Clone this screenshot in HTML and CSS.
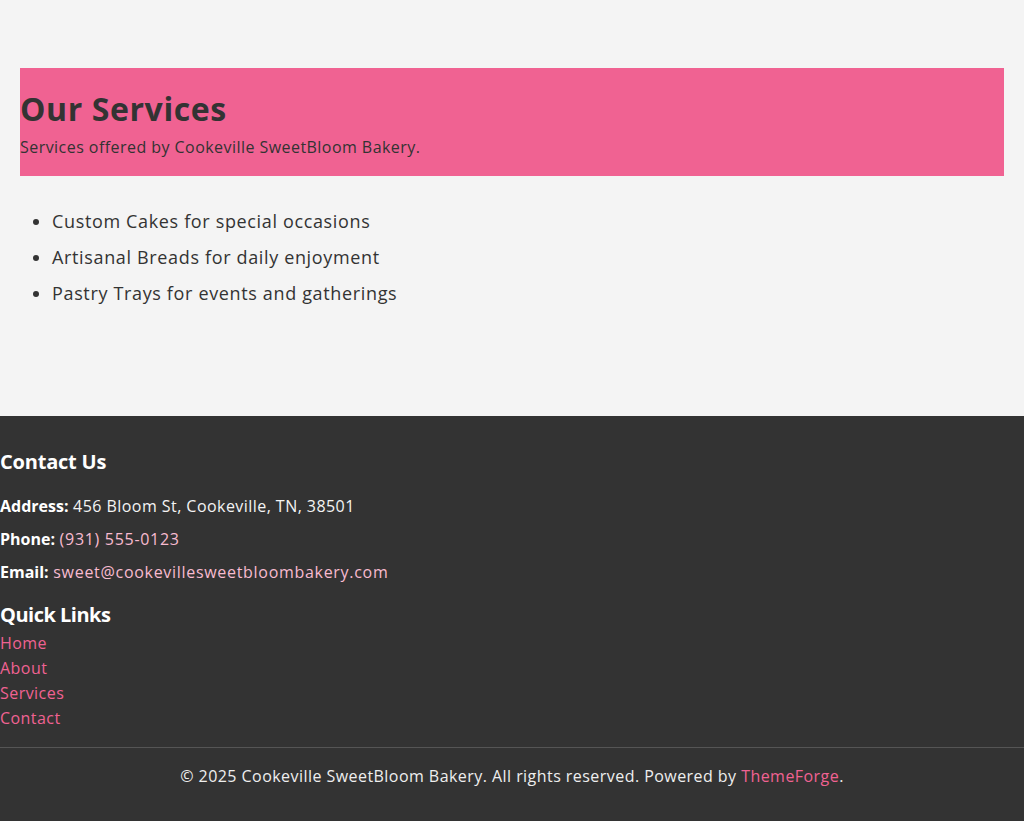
FILE: index.html
```html
<!DOCTYPE html>
<html lang="en">
<head>
<meta charset="utf-8">
<title>Our Services - Cookeville SweetBloom Bakery</title>
<link rel="stylesheet" href="styles.css">
</head>
<body>
<main class="main">
  <section class="hero">
    <h2 class="hero-title">Our Services</h2>
    <p class="hero-sub">Services offered by Cookeville SweetBloom Bakery.</p>
  </section>
  <ul class="services">
    <li>Custom Cakes for special occasions</li>
    <li>Artisanal Breads for daily enjoyment</li>
    <li>Pastry Trays for events and gatherings</li>
  </ul>
</main>
<footer class="footer">
  <h3 class="footer-title">Contact Us</h3>
  <p class="contact-line address"><strong>Address:</strong> 456 Bloom St, Cookeville, TN, 38501</p>
  <p class="contact-line"><strong>Phone:</strong> <a class="soft-link" href="#">(931) 555-0123</a></p>
  <p class="contact-line"><strong>Email:</strong> <a class="soft-link" href="#">sweet@cookevillesweetbloombakery.com</a></p>
  <h3 class="footer-title links-title">Quick Links</h3>
  <ul class="quick-links">
    <li><a href="#">Home</a></li>
    <li><a href="#">About</a></li>
    <li><a href="#">Services</a></li>
    <li><a href="#">Contact</a></li>
  </ul>
  <div class="copyright">© 2025 Cookeville SweetBloom Bakery. All rights reserved. Powered by <a href="#">ThemeForge</a>.</div>
</footer>
</body>
</html>
```

FILE: styles.css
```css
* { box-sizing: border-box; }
html, body { margin: 0; padding: 0; }
body {
  background: #f4f4f4;
  color: #333333;
  font-family: "Open Sans", "Liberation Sans", sans-serif;
  font-size: 16px;
  line-height: 24px;
  letter-spacing: 0.45px;
}
.main {
  padding: 68px 20px 0;
}
.hero {
  background: #f06292;
  padding: 20px 0 17px;
}
.hero-title {
  margin: 0;
  font-size: 32px;
  line-height: 42px;
  font-weight: 700;
  letter-spacing: 0.6px;
  color: #333333;
}
.hero-sub {
  margin: 5px 0 0;
  font-size: 16px;
  line-height: 24px;
  color: #333333;
}
.services {
  margin: 31px 0 0;
  padding: 0 0 109px 32px;
  font-size: 18px;
  line-height: 28px;
  letter-spacing: 0.65px;
}
.services li { margin-bottom: 8px; }
.services li:last-child { margin-bottom: 0; }
.footer {
  background: #333333;
  color: #ffffff;
  padding: 34px 0 33px;
}
.footer-title {
  margin: 0;
  font-size: 20px;
  line-height: 24px;
  font-weight: 700;
  letter-spacing: -0.2px;
}
.links-title { letter-spacing: -0.5px; }
.contact-line {
  margin: 9px 0 0;
  line-height: 24px;
  color: #f4f4f4;
}
.contact-line.address { margin-top: 20px; }
.contact-line strong { color: #ffffff; font-weight: 700; letter-spacing: 0; }
.soft-link { color: #f8bbd0; text-decoration: none; letter-spacing: 0.7px; }
.links-title { margin-top: 19px; }
.quick-links {
  list-style: none;
  margin: 4px 0 0;
  padding: 0;
  line-height: 25px;
}
.quick-links a { color: #f06292; text-decoration: none; }
.copyright {
  margin-top: 16px;
  border-top: 1px solid #555555;
  padding-top: 16px;
  text-align: center;
  color: #eeeeee;
}
.copyright a { color: #f06292; text-decoration: none; }
```
